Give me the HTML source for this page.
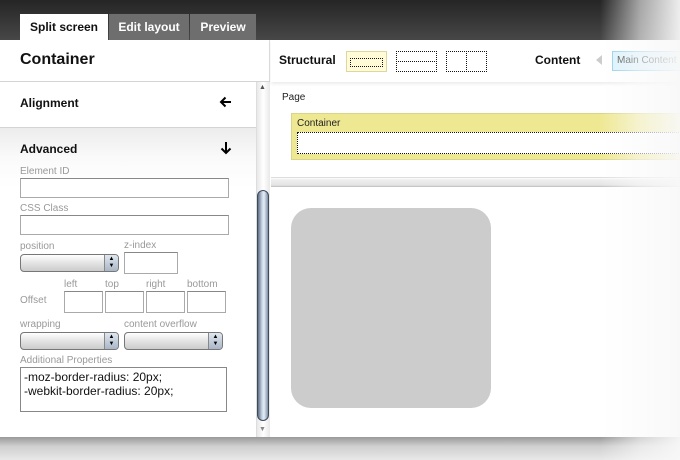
<!DOCTYPE html>
<html><head><style>
*{margin:0;padding:0;box-sizing:border-box}
body{width:680px;height:460px;overflow:hidden;background:#fff;font-family:"Liberation Sans",Arial,sans-serif;position:relative}
.abs{position:absolute}
.top{left:0;top:0;width:680px;height:40px;background:linear-gradient(#252525,#474747)}
.tab{top:14px;height:26px;font-size:12px;font-weight:bold;line-height:27px;text-align:center}
.bottom{left:0;top:437px;width:680px;height:23px;background:linear-gradient(#999,#cfcfcf 40%,#e8e8e8)}
.lbl{font-size:10px;color:#999}
.inp{border:1px solid #aaa;border-top-color:#888;background:#fff;height:20px}
.sel{height:18px;border:1px solid #777;border-radius:4px;background:linear-gradient(#fff,#e3e3e3 50%,#ccc)}
.sel i{position:absolute;right:0;top:0;width:14px;height:16px;border-left:1px solid #888;background:linear-gradient(#dfe6ef,#a9b6c7);border-radius:0 3px 3px 0;font-style:normal;font-size:6px;line-height:7px;text-align:center;padding-top:1px}
</style></head><body>
<div class="abs top"></div>
<div class="abs tab" style="left:20px;width:88px;background:#fff;color:#111">Split screen</div>
<div class="abs tab" style="left:109px;width:80px;background:#6e6e6e;color:#fff">Edit layout</div>
<div class="abs tab" style="left:190px;width:66px;background:#6e6e6e;color:#fff">Preview</div>

<div class="abs" style="left:0;top:40px;width:270px;height:397px;background:#fff;border-right:1px solid #ddd"></div>
<div class="abs" style="left:20px;top:51px;font-size:16px;font-weight:bold;color:#111">Container</div>
<div class="abs" style="left:0;top:81px;width:270px;height:1px;background:#d4d4d4"></div>
<div class="abs" style="left:20px;top:96px;font-size:12px;font-weight:bold;color:#111">Alignment</div>
<svg class="abs" style="left:219px;top:96px" width="14" height="12" viewBox="0 0 14 12"><path d="M12 6H2M6.5 1.5L2 6l4.5 4.5" stroke="#000" stroke-width="2" fill="none"/></svg>
<div class="abs" style="left:0;top:127px;width:256px;height:310px;border-top:1px solid #d4d4d4;background:linear-gradient(#ececec,#fafafa 30px,#fff 60px)"></div>
<div class="abs" style="left:20px;top:142px;font-size:12px;font-weight:bold;color:#111">Advanced</div>
<svg class="abs" style="left:220px;top:141px" width="12" height="14" viewBox="0 0 12 14"><path d="M6 1v11M1.5 7.5L6 12l4.5-4.5" stroke="#000" stroke-width="2" fill="none"/></svg>
<div class="abs lbl" style="left:20px;top:166px">Element ID</div>
<div class="abs inp" style="left:20px;top:178px;width:209px"></div>
<div class="abs lbl" style="left:20px;top:203px">CSS Class</div>
<div class="abs inp" style="left:20px;top:215px;width:209px"></div>
<div class="abs lbl" style="left:20px;top:241px">position</div>
<div class="abs sel" style="left:20px;top:254px;width:99px"><i>▲<br>▼</i></div>
<div class="abs lbl" style="left:124px;top:240px">z-index</div>
<div class="abs inp" style="left:124px;top:252px;width:54px;height:22px"></div>
<div class="abs lbl" style="left:64px;top:279px">left</div>
<div class="abs lbl" style="left:105px;top:279px">top</div>
<div class="abs lbl" style="left:146px;top:279px">right</div>
<div class="abs lbl" style="left:187px;top:279px">bottom</div>
<div class="abs lbl" style="left:20px;top:295px">Offset</div>
<div class="abs inp" style="left:64px;top:291px;width:39px;height:22px"></div>
<div class="abs inp" style="left:105px;top:291px;width:39px;height:22px"></div>
<div class="abs inp" style="left:146px;top:291px;width:39px;height:22px"></div>
<div class="abs inp" style="left:187px;top:291px;width:39px;height:22px"></div>
<div class="abs lbl" style="left:20px;top:319px">wrapping</div>
<div class="abs lbl" style="left:124px;top:319px">content overflow</div>
<div class="abs sel" style="left:20px;top:332px;width:99px"><i>▲<br>▼</i></div>
<div class="abs sel" style="left:124px;top:332px;width:99px"><i>▲<br>▼</i></div>
<div class="abs lbl" style="left:20px;top:355px">Additional Properties</div>
<div class="abs" style="left:20px;top:367px;width:207px;height:45px;border:1px solid #888;background:#fff;font-size:12px;line-height:14px;padding:2px 0 0 3px;color:#111">-moz-border-radius: 20px;<br>-webkit-border-radius: 20px;</div>

<div class="abs" style="left:256px;top:82px;width:14px;height:355px;background:linear-gradient(90deg,#e8e8e8,#fff,#e8e8e8);border-left:1px solid #ddd"></div>
<div class="abs" style="left:259px;top:84px;font-size:7px;color:#555">▲</div>
<div class="abs" style="left:259px;top:426px;font-size:7px;color:#888">▼</div>
<div class="abs" style="left:257px;top:190px;width:12px;height:231px;border:1px solid #3d4a5c;border-radius:6px;background:linear-gradient(90deg,#5d6d84,#c5d3e2 40%,#e6eef6 60%,#7d8ea5)"></div>

<div class="abs" style="left:271px;top:40px;width:409px;height:42px;background:#fff;box-shadow:0 2px 3px rgba(0,0,0,.08)"></div>
<div class="abs" style="left:279px;top:53px;font-size:12px;font-weight:bold;color:#111">Structural</div>
<div class="abs" style="left:346px;top:51px;width:41px;height:21px;background:#fffbd6;border:1px solid #ddd6a0"></div>
<div class="abs" style="left:350px;top:58px;width:33px;height:9px;border:1px dotted #111"></div>
<div class="abs" style="left:396px;top:51px;width:41px;height:21px;border:1px dotted #111"></div>
<div class="abs" style="left:396px;top:61px;width:41px;height:1px;border-top:1px dotted #111"></div>
<div class="abs" style="left:446px;top:51px;width:41px;height:21px;border:1px dotted #111"></div>
<div class="abs" style="left:466px;top:51px;width:1px;height:21px;border-left:1px dotted #111"></div>
<div class="abs" style="left:535px;top:53px;font-size:12px;font-weight:bold;color:#111">Content</div>
<div class="abs" style="left:596px;top:55px;width:0;height:0;border:5px solid transparent;border-right:6px solid #ccc;border-left:0"></div>
<div class="abs" style="left:612px;top:51px;width:80px;height:20px;background:#d9f1fb;border:1px solid #8fcde6;font-size:10px;line-height:18px;padding-left:4px;color:#333;white-space:nowrap">Main Content</div>

<div class="abs" style="left:282px;top:92px;font-size:10px;color:#222">Page</div>
<div class="abs" style="left:291px;top:113px;width:400px;height:47px;background:#efe893;border:1px solid #d9d489"></div>
<div class="abs" style="left:297px;top:118px;font-size:10px;color:#222">Container</div>
<div class="abs" style="left:297px;top:132px;width:400px;height:22px;background:#fff;border:1px dotted #111"></div>
<div class="abs" style="left:271px;top:177px;width:409px;height:10px;background:linear-gradient(#fff,#eee 20%,#e4e4e4 80%,#bbb);border-top:1px solid #ddd"></div>
<div class="abs" style="left:291px;top:208px;width:200px;height:200px;background:#ccc;border-radius:20px"></div>

<div class="abs bottom"></div>
<div class="abs" style="left:600px;top:0;width:80px;height:460px;background:linear-gradient(90deg,rgba(255,255,255,0),rgba(250,250,250,.6) 50%,rgba(248,248,248,.95))"></div>
</body></html>
